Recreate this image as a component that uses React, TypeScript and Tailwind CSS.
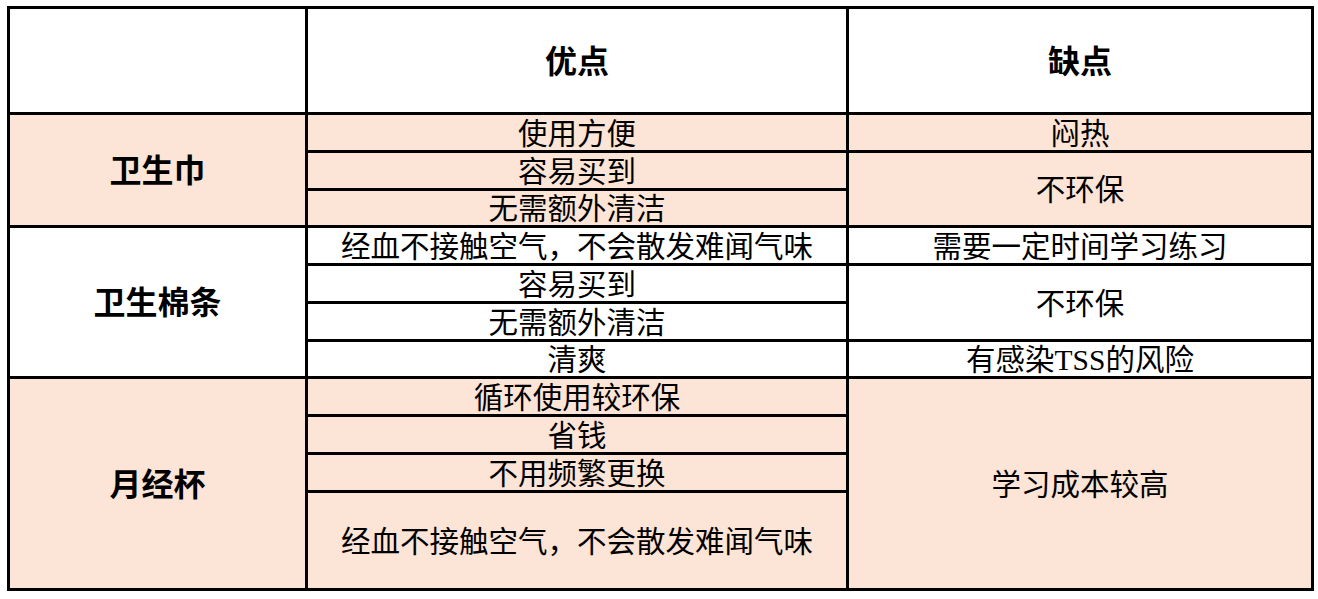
const peach = "bg-[#fce4d6]";

type CellProps = {
  children?: React.ReactNode;
  className?: string;
  head?: boolean;
};

function Cell({ children, className = "", head }: CellProps) {
  return (
    <div
      className={`flex items-center justify-center text-black leading-none whitespace-nowrap ${
        head
          ? "font-['Liberation_Sans','Noto_Sans_CJK_SC',sans-serif] text-[32px] font-bold pt-[2px]"
          : "font-['Liberation_Serif','Noto_Sans_CJK_SC',serif] text-[29.5px] pt-[4px]"
      } ${className}`}
    >
      {children}
    </div>
  );
}

export default function App() {
  return (
    <div className="bg-white w-[1318px] h-[599px] pl-[7px] pt-[6px]">
      <div className="grid w-fit bg-black gap-[3px] p-[3px] grid-cols-[295px_538px_462px] grid-rows-[103px_35px_35px_34px_35px_35px_35px_34px_35px_35px_35px_95px]">
        {/* header */}
        <Cell className="bg-white" />
        <Cell head className="bg-white">优点</Cell>
        <Cell head className="bg-white">缺点</Cell>

        {/* 卫生巾 */}
        <Cell head className={`${peach} row-span-3`}>卫生巾</Cell>
        <Cell className={peach}>使用方便</Cell>
        <Cell className={peach}>闷热</Cell>
        <Cell className={peach}>容易买到</Cell>
        <Cell className={`${peach} row-span-2`}>不环保</Cell>
        <Cell className={peach}>无需额外清洁</Cell>

        {/* 卫生棉条 */}
        <Cell head className="bg-white row-span-4">卫生棉条</Cell>
        <Cell className="bg-white">经血不接触空气，不会散发难闻气味</Cell>
        <Cell className="bg-white">需要一定时间学习练习</Cell>
        <Cell className="bg-white">容易买到</Cell>
        <Cell className="bg-white row-span-2">不环保</Cell>
        <Cell className="bg-white">无需额外清洁</Cell>
        <Cell className="bg-white">清爽</Cell>
        <Cell className="bg-white">有感染TSS的风险</Cell>

        {/* 月经杯 */}
        <Cell head className={`${peach} row-span-4`}>月经杯</Cell>
        <Cell className={peach}>循环使用较环保</Cell>
        <Cell className={`${peach} row-span-4`}>学习成本较高</Cell>
        <Cell className={peach}>省钱</Cell>
        <Cell className={peach}>不用频繁更换</Cell>
        <Cell className={peach}>经血不接触空气，不会散发难闻气味</Cell>
      </div>
    </div>
  );
}
